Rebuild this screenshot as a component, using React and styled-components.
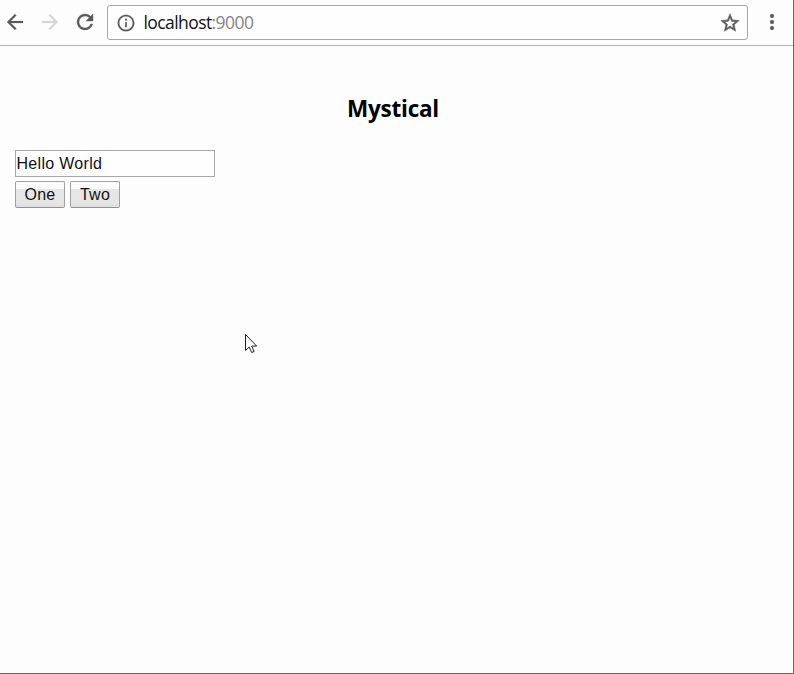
import React from "react";
import styled, { createGlobalStyle } from "styled-components";

const GlobalStyle = createGlobalStyle`
  * { box-sizing: border-box; }
  html, body { margin: 0; padding: 0; overflow: hidden; }
`;

const Window = styled.div`
  position: relative;
  display: flex;
  flex-direction: column;
  width: 794px;
  height: 674px;
  background: #fdfdfd;
  border-right: 1px solid #666;
  border-bottom: 1px solid #666;
`;

const Toolbar = styled.header`
  display: flex;
  align-items: flex-start;
  flex: none;
  height: 46px;
  padding: 5px 0 0 3px;
  border-bottom: 1px solid #b3b3b3;
`;

const IconSlot = styled.span`
  display: flex;
  flex: none;
  margin: ${(p) => p.$margin || "0"};
  color: ${(p) => p.$color || "#5a5a5a"};
`;

const AddressBar = styled.div`
  display: flex;
  align-items: center;
  width: 641px;
  height: 35px;
  margin-left: 10px;
  padding: 0 6px 0 8px;
  background: #fefefe;
  border: 1px solid #a6a6a6;
  border-radius: 3px;
`;

const Url = styled.span`
  flex: 1;
  margin-left: 7.5px;
  padding-bottom: 2px;
  font: 400 17.5px/24px "Open Sans", "Noto Sans", sans-serif;
  letter-spacing: -0.58px;
  color: #111;
`;

const Port = styled.span`
  color: #858585;
`;

const Page = styled.main`
  padding: 0 0 0 15px;
`;

const Title = styled.h1`
  width: 756px;
  margin: 47px 0 0;
  font: 700 22.5px/32px "Open Sans", "Noto Sans", sans-serif;
  letter-spacing: -0.25px;
  text-align: center;
  color: #000;
`;

const TextInput = styled.input`
  display: block;
  width: 200px;
  height: 27px;
  margin: 25px 0 4px;
  padding: 0;
  border: 1px solid #a6a6a6;
  border-radius: 0;
  outline: 0;
  background: #fefefe;
  font: 16px "Liberation Sans", Arial, sans-serif;
  letter-spacing: 0.3px;
  text-indent: 0.5px;
  color: #111;
`;

const ButtonRow = styled.div`
  display: flex;
  gap: 5px;
`;

const Button = styled.button`
  width: 50px;
  height: 27px;
  padding: 1px 0 0;
  border: 1px solid #a0a0a0;
  border-bottom-color: #929292;
  border-radius: 2px;
  background: linear-gradient(#fbfbfb 0 7px, #e6e6e6 7px 20px, #dedede);
  font: 16px "Liberation Sans", Arial, sans-serif;
  letter-spacing: 0.3px;
  color: #111;
`;

const Pointer = styled.svg`
  position: absolute;
  left: 244px;
  top: 333px;
`;

const icons = {
  back: "M20 11H7.83l5.59-5.59L12 4l-8 8 8 8 1.41-1.41L7.83 13H20v-2z",
  forward: "M12 4l-1.41 1.41L16.17 11H4v2h12.17l-5.58 5.59L12 20l8-8z",
  reload:
    "M17.65 6.35A7.958 7.958 0 0 0 12 4a8 8 0 1 0 7.73 10h-2.08A6 6 0 1 1 12 6c1.66 0 3.14.69 4.22 1.78L13 11h7V4l-2.35 2.35z",
  info: "M11 7h2v2h-2zm0 4h2v6h-2zm1-9C6.48 2 2 6.48 2 12s4.48 10 10 10 10-4.48 10-10S17.52 2 12 2zm0 18c-4.41 0-8-3.59-8-8s3.59-8 8-8 8 3.59 8 8-3.59 8-8 8z",
  star: "M22 9.24l-7.19-.62L12 2 9.19 8.63 2 9.24l5.46 4.73L5.82 21 12 17.27 18.18 21l-1.63-7.03L22 9.24zM12 15.4l-3.76 2.27 1-4.28-3.32-2.88 4.38-.38L12 6.1l1.71 4.04 4.38.38-3.32 2.88 1 4.28L12 15.4z",
  menu: "M12 8a2 2 0 1 0 0-4 2 2 0 0 0 0 4zm0 2a2 2 0 1 0 0 4 2 2 0 0 0 0-4zm0 6a2 2 0 1 0 0 4 2 2 0 0 0 0-4z",
};

function Icon({ name, size = 24, margin, color, weight = 0.2 }) {
  return (
    <IconSlot $margin={margin} $color={color}>
      <svg
        width={size}
        height={size}
        viewBox="0 0 24 24"
        fill="currentColor"
        stroke="currentColor"
        strokeWidth={weight}
      >
        <path d={icons[name]} />
      </svg>
    </IconSlot>
  );
}

export default function App() {
  return (
    <>
      <GlobalStyle />
      <Window>
        <Toolbar>
          <Icon name="back" margin="5px 0 0" />
          <Icon name="forward" margin="5px 0 0 11px" color="#d6d6d6" />
          <Icon name="reload" margin="5px 0 0 11px" weight={0.4} />
          <AddressBar>
            <Icon name="info" size={20} />
            <Url>
              localhost<Port>:9000</Port>
            </Url>
            <Icon name="star" size={22} weight={0.6} />
          </AddressBar>
          <Icon name="menu" margin="5px 0 0 11.5px" />
        </Toolbar>
        <Page>
          <Title>Mystical</Title>
          <TextInput defaultValue="Hello World" />
          <ButtonRow>
            <Button>One</Button>
            <Button>Two</Button>
          </ButtonRow>
        </Page>
        <Pointer width="14" height="22" viewBox="0 0 14 22">
          <path
            d="M1.5 1.5v16l3.7-3.5 2.5 5.5 2.4-1-2.4-5.4h5z"
            fill="#fff"
            stroke="#1c1c2c"
            strokeWidth="1"
          />
        </Pointer>
      </Window>
    </>
  );
}
